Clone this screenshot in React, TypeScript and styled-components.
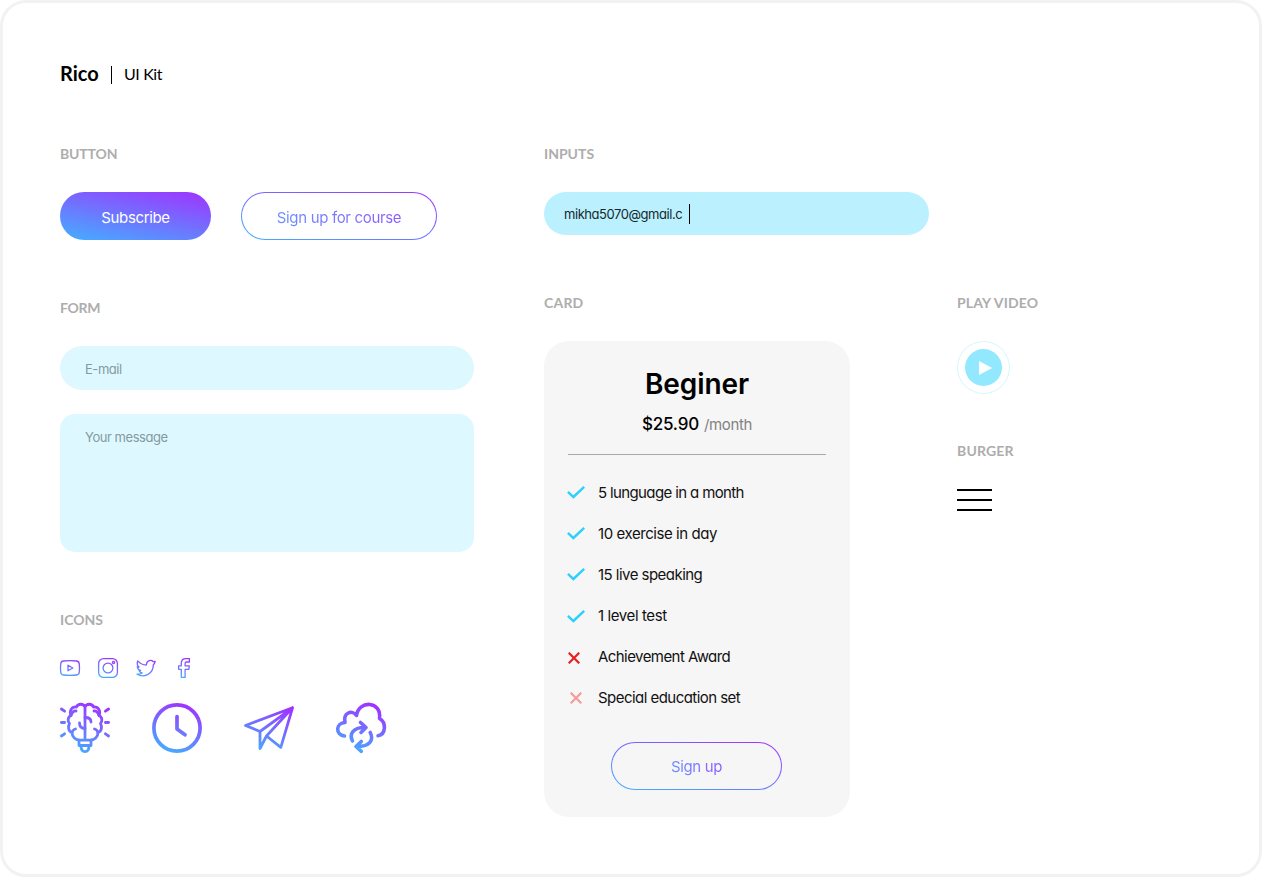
import React from 'react';
import styled, { createGlobalStyle } from 'styled-components';

const BLUE = '#43afff';
const PURPLE = '#a032ff';
const brand = `linear-gradient(12deg, ${BLUE}, ${PURPLE})`;

const GlobalStyle = createGlobalStyle`
  * { box-sizing: border-box; }
  body {
    margin: 0;
    background: #fff;
    color: #111;
    font-family: Inter, sans-serif;
    font-feature-settings: 'cv11';
  }
  h1, h2, h3, p, ul { margin: 0; padding: 0; font-weight: 400; }
  svg { display: block; fill: none; flex: none; }
`;

const Frame = styled.main`
  width: 1262px;
  height: 877px;
  padding: 57px 57px 0;
  border: 3px solid #f2f2f2;
  border-radius: 26px;
  overflow: hidden;
`;

const Header = styled.header`
  display: flex;
  align-items: center;
  height: 26px;
  margin-bottom: 58px;
  color: #000;
  font-family: Lato, sans-serif;
`;

const Brand = styled.h1`
  width: 51px;
  font-size: 20px;
  font-weight: 700;
  line-height: 26px;
`;

const Rule = styled.span`
  width: 1px;
  height: 18px;
  margin-top: 4px;
  background: #000;
`;

const Subtitle = styled.p`
  margin: 2px 0 0 12px;
  font-size: 16px;
  line-height: 24px;
  letter-spacing: -0.4px;
`;

const Columns = styled.div`
  display: flex;
  gap: 70px;
`;

const Column = styled.div<{ $width?: number; $gap?: number }>`
  display: flex;
  flex-direction: column;
  gap: ${(p) => p.$gap ?? 58}px;
  width: ${(p) => (p.$width ? `${p.$width}px` : 'auto')};
`;

const SectionBox = styled.section`
  display: flex;
  flex-direction: column;
  gap: 28px;
`;

const SectionTitle = styled.h2<{ $track: number }>`
  height: 20px;
  color: #adadad;
  font-family: Lato, sans-serif;
  font-size: 14px;
  font-weight: 700;
  line-height: 20px;
  letter-spacing: ${(p) => p.$track}px;
  white-space: nowrap;
`;

const Row = styled.div<{ $gap: number }>`
  display: flex;
  align-items: flex-start;
  gap: ${(p) => p.$gap}px;
`;

const ButtonBase = styled.button<{ $width: number }>`
  display: flex;
  align-items: center;
  justify-content: center;
  width: ${(p) => p.$width}px;
  height: 48px;
  padding: 3px 0 0;
  border-radius: 24px;
  font-family: inherit;
  font-feature-settings: inherit;
  font-size: 15px;
  line-height: 20px;
  letter-spacing: -0.34px;
  white-space: nowrap;
`;

const SolidButton = styled(ButtonBase)`
  border: 0;
  background: ${brand};
  color: #fff;
`;

const OutlineButton = styled(ButtonBase)<{ $surface: string }>`
  border: 1px solid transparent;
  background:
    linear-gradient(${(p) => p.$surface}, ${(p) => p.$surface}) padding-box,
    ${brand} border-box;
`;

const PlanButton = styled(OutlineButton)`
  padding-top: 1px;
  margin-right: 1px;
`;

const GradientText = styled.span`
  background: linear-gradient(90deg, #6a8eff, #8c5cff);
  background-clip: text;
  -webkit-background-clip: text;
  color: transparent;
`;

const FormFields = styled.div`
  display: flex;
  flex-direction: column;
  gap: 24px;
`;

const Field = styled.div<{ $height: number; $radius: number }>`
  height: ${(p) => p.$height}px;
  padding: 13px 25px;
  border-radius: ${(p) => p.$radius}px;
  background: #def8ff;
  color: #849a9f;
  font-size: 13px;
  line-height: 20px;
  letter-spacing: -0.45px;
`;

const FilledInput = styled.div`
  display: flex;
  align-items: center;
  width: 385px;
  height: 43px;
  padding: 0 20px;
  border-radius: 22px;
  background: #bbf1fe;
  color: #15282d;
  font-size: 13px;
  line-height: 20px;
`;

const Typed = styled.span`
  width: 125px;
  letter-spacing: -0.45px;
  white-space: nowrap;
`;

const Caret = styled.span`
  width: 1px;
  height: 20px;
  background: #000;
`;

const IconStack = styled.div`
  display: flex;
  flex-direction: column;
  gap: 25px;
`;

const PlanCard = styled.article`
  display: flex;
  flex-direction: column;
  align-items: center;
  width: 306px;
  height: 476px;
  padding: 25px 24px 0;
  border-radius: 25px;
  background: #f6f6f6;
`;

const PlanName = styled.h3`
  color: #000;
  font-size: 28px;
  font-weight: 600;
  line-height: 36px;
  letter-spacing: -0.1px;
`;

const Price = styled.p`
  display: flex;
  align-items: baseline;
  gap: 5px;
  margin-top: 10px;
  color: #000;
  font-size: 17px;
  font-weight: 500;
  line-height: 24px;
  letter-spacing: -0.2px;
`;

const Period = styled.span`
  color: #828282;
  font-size: 15px;
  font-weight: 400;
  letter-spacing: -0.35px;
`;

const Divider = styled.div`
  width: 258px;
  height: 1px;
  margin: 17px 0;
  background: #a9a9a9;
`;

const Features = styled.ul`
  width: 258px;
  margin-bottom: 24px;
  list-style: none;
`;

const Feature = styled.li`
  display: flex;
  align-items: center;
  height: 41px;
  color: #111;
  font-size: 15px;
  line-height: 20px;
`;

const Mark = styled.span<{ $shift: number; $drop: number }>`
  width: 30px;
  padding-left: ${(p) => p.$shift}px;
  padding-top: ${(p) => p.$drop * 2}px;
`;

const features = [
  { text: '5 lunguage in a month', mark: 'check', track: -0.63, drop: 0 },
  { text: '10 exercise in day', mark: 'check', track: -0.43, drop: 0 },
  { text: '15 live speaking', mark: 'check', track: -0.53, drop: 0 },
  { text: '1 level test', mark: 'check', track: -0.4, drop: 1 },
  { text: 'Achievement Award', mark: 'cross', track: -0.56, drop: 1 },
  { text: 'Special education set', mark: 'faded', track: -0.54, drop: 0 },
];

const FeatureText = styled.span<{ $track: number }>`
  letter-spacing: ${(p) => p.$track}px;
  white-space: nowrap;
`;

const CheckIcon = styled.svg`
  margin-left: -1px;
`;

const Check = () => (
  <CheckIcon width="18" height="13" viewBox="0 0 18 13" stroke="#2bd0ff" strokeWidth="2.4">
    <path d="M0.9 5.8 6.4 11 17.2 0.9" />
  </CheckIcon>
);

const Cross = ({ color }: { color: string }) => (
  <svg width="12" height="12" viewBox="0 0 12 12" stroke={color} strokeWidth="2.2">
    <path d="M.7.7 11.3 11.3M11.3.7.7 11.3" />
  </svg>
);

const Section = ({ title, track = 0, children }: { title: string; track?: number; children: React.ReactNode }) => (
  <SectionBox>
    <SectionTitle $track={track}>{title}</SectionTitle>
    {children}
  </SectionBox>
);

const GradientIcon = ({ id, size, stroke, children }: { id: string; size: number; stroke: number; children: React.ReactNode }) => (
  <svg
    width={size}
    height={size}
    viewBox={`0 0 ${size} ${size}`}
    stroke={`url(#${id})`}
    strokeWidth={stroke}
    strokeLinecap="round"
    strokeLinejoin="round"
    overflow="visible"
  >
    <defs>
      <linearGradient id={id} gradientUnits="userSpaceOnUse" x1={size * 0.3} y1={size} x2={size * 0.65} y2="0">
        <stop stopColor={BLUE} />
        <stop offset="1" stopColor={PURPLE} />
      </linearGradient>
    </defs>
    {children}
  </svg>
);

const Burger = styled.div`
  display: flex;
  flex-direction: column;
  gap: 8px;
  width: 35px;
  span { height: 2px; background: #000; }
`;

export default function App() {
  return (
    <>
      <GlobalStyle />
      <Frame>
        <Header>
          <Brand>Rico</Brand>
          <Rule />
          <Subtitle>UI Kit</Subtitle>
        </Header>
        <Columns>
          <Column $width={414}>
            <Section title="BUTTON" track={-0.15}>
              <Row $gap={30}>
                <SolidButton $width={151}>Subscribe</SolidButton>
                <OutlineButton $width={196} $surface="#fff">
                  <GradientText>Sign up for course</GradientText>
                </OutlineButton>
              </Row>
            </Section>
            <Section title="FORM" track={-0.3}>
              <FormFields>
                <Field $height={44} $radius={22}>E-mail</Field>
                <Field $height={138} $radius={15}>Your message</Field>
              </FormFields>
            </Section>
            <Section title="ICONS">
              <IconStack>
                <Row $gap={18}>
                  <GradientIcon id="youtube" size={20} stroke={1.3}>
                    <path d="M3.5 3Q10 2.2 16.5 3 19.1 3.3 19.3 6 19.7 10 19.3 14 19.1 16.7 16.5 17 10 17.8 3.5 17 .9 16.7.7 14 .3 10 .7 6 .9 3.3 3.5 3Z" />
                    <path d="M8 7.2v5.6l4.800-2.800Z" />
                  </GradientIcon>
                  <GradientIcon id="instagram" size={20} stroke={1.3}>
                    <rect x=".6" y=".6" width="18.8" height="18.8" rx="5" />
                    <circle cx="10" cy="10" r="4.900" />
                    <circle cx="15.500" cy="4.500" r="1.100" />
                  </GradientIcon>
                  <GradientIcon id="twitter" size={20} stroke={1.3}>
                    <path d="M19.2 3.5c-.9.2-1.3.1-1.9.2-2-2.2-6.6-1.6-7 3.3C6.500 7 4 5.400 1.700 2.900.8 5.300 1.300 7.500 3 9l-1.700-.4c.2 2 1.400 3.200 3.300 3.900l-1.500.2c.6 1.400 1.600 2 3 2.200-1.500 1.100-3.200 1.400-5.100 1.300 6.700 3.700 16.300.4 16.300-9.200.8-.9 1.400-1.900 1.900-3.500Z" />
                  </GradientIcon>
                  <GradientIcon id="facebook" size={20} stroke={1.3}>
                    <path d="M7.300 19.400v-8.100H4.600V7.800h2.700V5.200C7.300 2.300 9.100.6 11.900.6h3.500V4h-2.700c-1.100 0-1.600.6-1.600 1.700v2.100h4.200l-.5 3.500h-3.700v8.100Z" />
                  </GradientIcon>
                </Row>
                <Row $gap={42}>
                  <GradientIcon id="brain" size={50} stroke={2.8}>
                    <path d="M1.400 6 4.600 8.200M1.400 19.500h3.200M1.400 33l3.200-2.200M48.600 6l-3.200 2.200M48.600 19.500h-3.200M48.600 33l-3.200-2.200" />
                    <path d="M25 4v33M25 4C23.500.3 18 .3 16.500 4 11.500 3.500 9 8 11 12.500 7.500 14 7.500 18.500 9.500 20.500 7.500 24 8.500 28.500 12 29.500 12 34 15.500 37.200 20 37.200h10c4.500 0 8-3.200 8-7.700 3.500-1 4.500-5.500 2.500-9 2-2 2-6.500-1.500-8C41 8 38.500 3.500 33.500 4 32 .3 26.500.3 25 4" />
                    <path d="M25 25.500c-3.500 0-5.500-2-5.500-5.500M25 14.500c3.500 0 6 1.500 6 4.500M11 12.500q2-5 5-4.500M39 12.500q-2-5-5-4.500M12 29.500q1-3 3.500-3.500M38 29.500q-1-3-3.500-3.500" />
                    <path d="M19 37.200v5.300h12v-5.300M21 43q0 5.600 4 5.600t4-5.600" />
                  </GradientIcon>
                  <GradientIcon id="clock" size={50} stroke={3.7}>
                    <circle cx="25" cy="25" r="23.100" />
                    <path d="M25 13.500V26l8 5.800" />
                  </GradientIcon>
                  <GradientIcon id="plane" size={50} stroke={2.8}>
                    <path d="M48.500 4.800 1.500 22.500 16 28.500 48.500 4.800 22.500 33 16 45.500V28.500M22.500 33 36.800 44.300 48.500 4.800" />
                  </GradientIcon>
                  <GradientIcon id="cloud" size={50} stroke={3.6}>
                    <path d="M8.500 33C-.8 32-.5 20 9 19.500 7 9.500 16 6.500 20.500 12.500 22.500-3 46-2.500 43.500 15.500 50.500 19.500 50 31.500 42 32.800" />
                    <path d="M16.500 38C13 31 17 24.500 28.500 24.500M24.500 19.500 30 24.500 25 29.500M34.200 29.500C38 37 34 43.500 21 43.500M25.300 38.500 20 43.500 25.300 48.300" />
                  </GradientIcon>
                </Row>
              </IconStack>
            </Section>
          </Column>
          <Column>
            <Section title="INPUTS">
              <FilledInput>
                <Typed>mikha5070@gmail.c</Typed>
                <Caret />
              </FilledInput>
            </Section>
            <Row $gap={107}>
              <Section title="CARD" track={0.2}>
                <PlanCard>
                  <PlanName>Beginer</PlanName>
                  <Price>
                    $25.90 <Period>/month</Period>
                  </Price>
                  <Divider />
                  <Features>
                    {features.map((f) => (
                      <Feature key={f.text}>
                        <Mark $shift={f.mark === 'faded' ? 2 : 0} $drop={f.drop}>
                          {f.mark === 'check' ? <Check /> : <Cross color={f.mark === 'cross' ? '#e9201f' : '#f39c9c'} />}
                        </Mark>
                        <FeatureText $track={f.track}>{f.text}</FeatureText>
                      </Feature>
                    ))}
                  </Features>
                  <PlanButton $width={171} $surface="#f6f6f6">
                    <GradientText>Sign up</GradientText>
                  </PlanButton>
                </PlanCard>
              </Section>
              <Column $gap={47}>
                <Section title="PLAY VIDEO" track={0.16}>
                  <svg width="53" height="53" viewBox="0 0 53 53">
                    <circle cx="26.500" cy="26.500" r="26" stroke="#d4f6fd" />
                    <circle cx="26.500" cy="26.500" r="18.500" fill="#92e9ff" />
                    <path d="M22 20v14l13-7Z" fill="#fff" />
                  </svg>
                </Section>
                <Section title="BURGER" track={0.16}>
                  <Burger>
                    <span />
                    <span />
                    <span />
                  </Burger>
                </Section>
              </Column>
            </Row>
          </Column>
        </Columns>
      </Frame>
    </>
  );
}
